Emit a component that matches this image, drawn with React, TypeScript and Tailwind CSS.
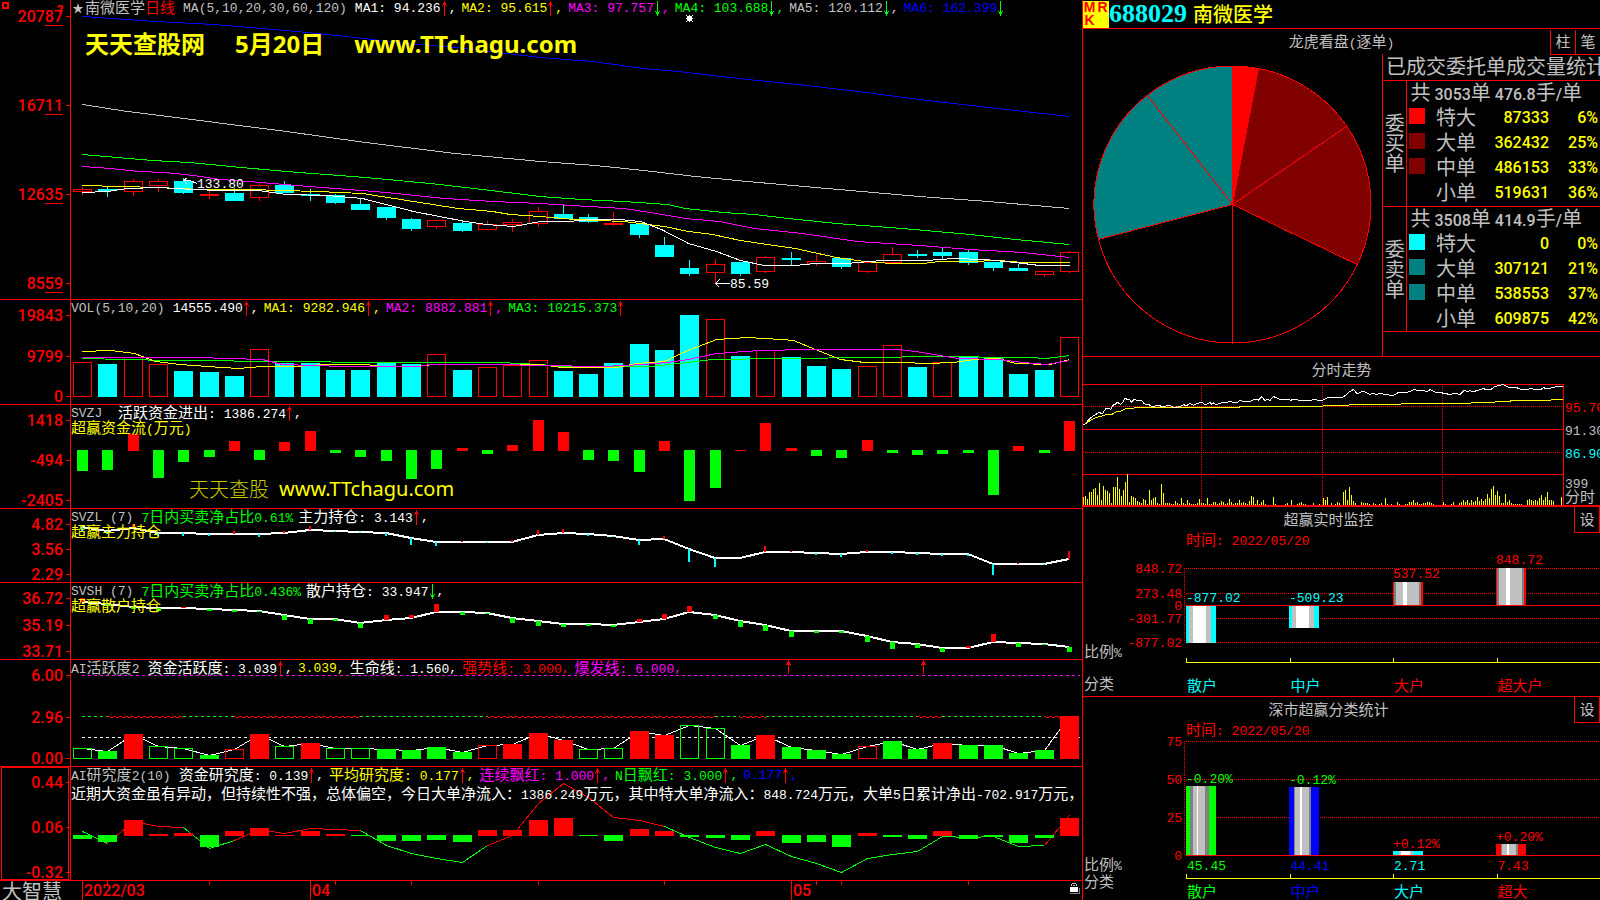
import React from 'react';
import { clsx } from 'clsx';

const RED = '#ff0000';
const GREEN = '#00ff00';
const CYAN = '#00ffff';
const YELLOW = '#ffff00';
const MAGENTA = '#ff00ff';
const SILVER = '#c0c0c0';
const BLUE = '#0000ff';
const TEAL = '#008080';
const MAROON = '#800000';

const DIGITS = "font-['Roboto','Noto_Sans_CJK_SC',sans-serif]";
const CJK = "font-['Noto_Sans_CJK_SC',sans-serif]";
const MONO = "font-['Liberation_Mono','Noto_Sans_CJK_SC',monospace]";

// one slot per trading day
const DAYS = 40;
const dayX = (i: number) => Math.round(82 + (987 * i) / (DAYS - 1));

/* ---------- data ---------- */

// [high, top, bottom, low, up?]
const candles: [number, number, number, number, number][] = [
  [187, 189, 192, 195, 1], [187, 189, 191, 197, 0], [179, 181, 192, 196, 1], [179, 181, 186, 192, 1],
  [178, 181, 193, 194, 0], [191, 194, 196, 199, 1], [188, 193, 201, 201, 0], [183, 185, 198, 201, 1],
  [181, 185, 193, 193, 0], [189, 194, 196, 201, 0], [194, 195, 203, 204, 0], [198, 204, 210, 210, 0],
  [207, 207, 218, 220, 0], [218, 219, 229, 231, 0], [220, 220, 227, 229, 1], [220, 223, 231, 232, 0],
  [221, 224, 230, 230, 1], [219, 222, 225, 232, 1], [207, 211, 224, 227, 1], [205, 214, 219, 219, 0],
  [214, 217, 222, 223, 0], [212, 223, 224, 226, 1], [224, 224, 235, 238, 0], [237, 245, 257, 257, 0],
  [260, 268, 274, 276, 0], [259, 264, 273, 283, 1], [262, 262, 274, 276, 0], [256, 257, 272, 273, 1],
  [252, 258, 260, 266, 0], [255, 261, 264, 266, 1], [258, 258, 267, 269, 0], [262, 262, 272, 273, 1],
  [247, 254, 263, 263, 1], [250, 254, 256, 258, 0], [248, 252, 256, 259, 0], [250, 252, 263, 265, 0],
  [262, 262, 268, 271, 0], [264, 268, 271, 271, 0], [270, 271, 275, 277, 1], [251, 252, 272, 273, 1],
];

const priceLines = [
  { color: BLUE, points: '82,16 155,21 214,24 296,31 337,35 406,43 455,47 540,57 592,61 643,68 678,71 747,79 788,83 850,90 919,99 988,107 1069,116' },
  { color: SILVER, points: '82,104 127,111 207,121 286,131 365,142 455,153 540,161 595,165 643,170 695,176 747,181 815,187 850,190 919,196 988,201 1069,208' },
  { color: GREEN, points: '82,154 152,160 189,162 241,167 286,171 365,177 430,183 482,189 540,196 581,199 623,201 667,204 685,208 723,212 754,214 788,218 836,223 902,228 970,234 1015,239 1069,244' },
  { color: MAGENTA, points: '82,166 110,168 138,171 165,172 193,175 220,179 248,181 296,185 348,189 386,192 444,198 492,201 540,203 571,205 623,208 650,212 685,218 719,221 754,228 802,233 857,241 919,245 970,249 1022,252 1069,257' },
  { color: YELLOW, points: '82,185 158,187 200,189 248,189 317,191 362,193 413,201 458,208 492,211 510,214 540,216 574,219 623,221 664,226 688,231 712,234 740,240 767,244 795,248 836,257 864,261 891,263 922,263 939,261 970,261 998,260 1022,262 1069,262' },
  { color: '#ffffff', points: '82,192 107,191 127,188 158,187 193,189 220,190 258,190 286,194 327,195 362,198 413,211 465,221 486,224 513,226 540,221 568,221 592,219 619,219 640,221 661,229 688,243 716,251 740,260 764,265 795,265 815,263 846,263 881,260 926,260 953,258 984,259 1015,262 1039,265 1069,265' },
];

const volumes = [
  362, 364, 357, 364, 371, 372, 376, 349, 363, 363, 370, 370, 363, 364, 354, 370, 367, 365, 360, 371,
  374, 363, 344, 350, 315, 319, 356, 350, 357, 366, 369, 366, 345, 367, 362, 356, 357, 374, 370, 337,
];
const volumeUp = '1011000100000010111000000101000110100001';

const volumeLines = [
  { color: GREEN, points: '82,358 169,360 296,361 365,362 499,362 540,364 561,366 650,366 678,363 712,359 781,358 877,357 926,356 1029,357 1046,358 1069,355' },
  { color: YELLOW, points: '82,351 110,350 134,353 155,361 179,364 207,366 238,368 262,366 296,366 324,364 365,364 382,366 413,366 434,364 540,364 561,367 616,367 636,363 664,361 685,351 716,339 747,337 781,339 793,340 815,349 840,359 864,362 902,362 926,363 953,362 974,359 998,358 1015,363 1050,364 1069,359' },
  { color: MAGENTA, points: '82,357 196,357 262,359 282,364 344,366 417,366 430,364 499,364 540,365 602,366 643,364 667,362 688,359 716,353 760,350 809,349 898,349 922,352 957,358 998,359 1022,362 1046,364 1069,360' },
];

// far end of every bar, the near end is the zero line
const moneyFlow = [
  471, 470, 434, 478, 462, 457, 441, 460, 442, 431, 453, 457, 461, 479, 469, 448, 454, 445, 420, 432,
  460, 461, 472, 441, 501, 488, 450, 423, 448, 456, 458, 440, 453, 455, 454, 453, 495, 446, 453, 421,
];

const mainHold = [
  527, 531, 528, 533, 533, 534, 534, 534, 533, 530, 531, 532, 533, 538, 542, 542, 542, 542, 535, 533,
  534, 536, 540, 539, 549, 558, 558, 552, 552, 553, 554, 552, 552, 553, 554, 554, 564, 564, 564, 559,
];
const mainHoldEnd = [
  531, 534, 524, 536, 536, 536, 531, 537, 531, 526, 532, 533, 536, 545, 546, 541, 543, 540, 530, 529,
  536, 537, 545, 536, 562, 567, 558, 546, 551, 555, 557, 550, 554, 555, 556, 556, 575, 563, 565, 551,
];

const retailHold = [
  602, 604, 607, 608, 608, 609, 610, 611, 615, 619, 619, 623, 620, 618, 612, 612, 613, 618, 621, 624,
  624, 625, 622, 619, 612, 615, 621, 625, 631, 631, 631, 636, 642, 644, 648, 648, 642, 643, 644, 647,
];
const retailHoldEnd = [
  598, 606, 609, 611, 607, 611, 612, 612, 620, 624, 621, 628, 615, 615, 604, 615, 614, 623, 626, 627,
  626, 627, 619, 614, 606, 619, 627, 631, 637, 633, 633, 642, 649, 648, 652, 646, 634, 647, 645, 652,
];

// R / G filled, r / g outlined
const activity = [
  748, 751, 734, 746, 748, 755, 749, 734, 746, 743, 748, 748, 749, 750, 747, 752, 745, 744, 733, 740,
  749, 748, 731, 735, 725, 728, 745, 735, 747, 750, 754, 746, 741, 749, 743, 745, 745, 753, 750, 716,
];
const activityKind = 'gGRggGrRgRggGGGGrRRRggRRggGRGGGrGGRGGGGR';

const research = [
  839, 842, 820, 834, 833, 847, 831, 828, 835, 831, 834, 836, 841, 841, 840, 842, 830, 830, 820, 818,
  836, 841, 829, 831, 837, 838, 840, 831, 843, 842, 847, 833, 837, 839, 831, 839, 837, 843, 838, 818,
];
const researchLine = [
  831, 843, 821, 826, 827, 848, 840, 829, 833, 828, 829, 830, 845, 853, 858, 862, 845, 835, 803, 783,
  797, 817, 820, 826, 837, 847, 853, 844, 856, 863, 872, 858, 854, 851, 836, 837, 836, 846, 845, 815,
];
const researchRuns = [
  { from: 0, to: 1, color: GREEN }, { from: 1, to: 4, color: RED }, { from: 4, to: 6, color: GREEN },
  { from: 6, to: 11, color: RED }, { from: 11, to: 16, color: GREEN }, { from: 16, to: 23, color: RED },
  { from: 23, to: 38, color: GREEN }, { from: 38, to: 39, color: RED },
];

const intradayPrice =
  '10,210 18,205 24,196 30,190 38,184 45,180 55,173 68,175 78,160 85,160 92,163 100,150 106,148 112,142 122,148 128,142 135,130 142,133 150,135 155,142 162,133 172,136 185,136 192,146 200,150 206,148 215,155 225,153 235,151 245,154 255,154 265,151 275,154 288,159 300,154 310,149 320,152 330,145 340,151 350,146 365,141 372,147 380,147 390,143 395,148 400,144 408,150 420,145 430,141 440,142 450,139 460,142 470,144 480,136 490,139 500,140 512,138 525,133 535,135 545,125 555,137 562,133 570,136 580,125 590,128 600,133 612,135 625,133 632,136 640,133 655,135 670,138 680,135 690,137 700,133 715,136 730,135 740,129 750,127 775,129 790,126 795,122 808,110 814,108 820,103 824,107 832,117 840,112 848,108 860,114 870,118 882,115 890,119 900,115 910,117 920,117 930,121 940,122 950,115 960,111 975,113 990,110 1002,103 1015,108 1030,106 1042,110 1050,104 1065,111 1080,113 1095,115 1110,119 1120,115 1140,118 1146,113 1153,105 1160,110 1170,107 1180,110 1190,107 1200,104 1210,101 1220,104 1235,102 1243,96 1250,93 1260,92 1268,88 1276,92 1285,97 1300,97 1310,98 1320,102 1340,103 1355,101 1365,104 1385,102 1390,98 1400,101 1410,100 1420,97 1430,95 1449,94';
const intradayAverage =
  '10,210 20,205 28,198 38,193 46,188 62,184 74,180 96,178 104,172 124,168 138,160 185,158 290,156 300,157 478,157 480,154 728,154 730,151 806,151 808,148 962,148 964,145 1172,145 1175,142 1244,142 1246,139 1290,139 1294,136 1412,136 1414,133 1449,133';
const intradayVolume = [
  8, 9, 6, 13, 13, 16, 17, 10, 22, 5, 19, 15, 14, 12, 2, 18, 18, 28, 16, 9, 15, 23, 31, 3, 9, 8, 7, 4, 3, 2,
  6, 5, 1, 15, 5, 7, 8, 2, 1, 21, 12, 2, 2, 2, 1, 1, 4, 2, 1, 7, 2, 1, 5, 2, 1, 1, 1, 2, 6, 2,
  2, 1, 7, 1, 1, 3, 3, 1, 2, 4, 3, 1, 2, 6, 3, 1, 2, 2, 5, 2, 3, 2, 1, 4, 9, 8, 1, 5, 1, 3,
  5, 1, 0, 0, 0, 8, 1, 0, 0, 0, 0, 1, 2, 0, 5, 0, 0, 1, 2, 3, 1, 1, 0, 0, 0, 2, 0, 0, 1, 0,
  7, 5, 8, 0, 2, 0, 1, 3, 2, 0, 13, 15, 5, 18, 10, 4, 2, 0, 0, 3, 2, 2, 2, 1, 0, 2, 1, 0, 1, 2,
  0, 7, 1, 0, 1, 0, 0, 3, 1, 0, 0, 1, 1, 3, 3, 5, 2, 3, 1, 1, 2, 2, 3, 3, 2, 1, 0, 0, 0, 0,
  3, 1, 0, 0, 1, 3, 0, 0, 2, 3, 5, 3, 5, 2, 5, 3, 4, 8, 4, 6, 4, 6, 11, 7, 16, 19, 10, 14, 9, 2,
  2, 11, 3, 5, 2, 1, 1, 1, 1, 1, 0, 0, 5, 6, 5, 4, 5, 4, 7, 10, 5, 8, 13, 5, 5, 4, 0, 0, 0, 8,
];

/* ---------- text helpers ---------- */

const splitRuns = (text: string) => text.split(/([\u3000-\u9fff\uff00-\uffef]+)/).filter(Boolean);
const isWide = (part: string) => /[\u3000-\uffef]/.test(part);

// Chinese runs are set larger than the half-width runs next to them
const Txt = ({ children, className }: { children: string; className?: string }) => (
  <span className={clsx('whitespace-pre', MONO, className)}>
    {splitRuns(children).map((part, i) => (
      <span key={i} className={isWide(part) ? `text-[15px] ${CJK}` : 'text-[13px]'}>{part}</span>
    ))}
  </span>
);

const BigTxt = ({ children }: { children: string }) => (
  <span className="whitespace-pre">
    {splitRuns(children).map((part, i) => (
      <span key={i} className={isWide(part) ? `text-xl leading-[22px] ${CJK}` : `text-base leading-[22px] font-medium ${DIGITS}`}>{part}</span>
    ))}
  </span>
);

const Arrow = ({ down = false }) => (
  <svg width="8" height="15" viewBox="0 0 8 15" shapeRendering="crispEdges" className="shrink-0">
    {down
      ? <path d="M3 0h1v15h-1zM2 11h3v2h-3zM1 10h1v1h-1zM5 10h1v1h-1z" fill={GREEN} />
      : <path d="M3 0h1v15h-1zM2 2h3v2h-3zM1 4h1v1h-1zM5 4h1v1h-1z" fill={RED} />}
  </svg>
);

type Item = { text: string; color: string; dir?: 'up' | 'down'; end?: boolean };

const Header = ({ name, items, lead }: { name: string; items: Item[]; lead?: React.ReactNode }) => (
  <div className="absolute inset-x-0 top-0 flex h-4 items-center leading-4">
    {lead}
    <Txt className="mr-2 text-[#c0c0c0]">{name}</Txt>
    <div className="flex items-center gap-[5px]">
      {items.map((it, i) => (
        <span key={i} className={clsx('flex items-center', it.color)}>
          <Txt>{it.text}</Txt>
          {it.dir && <Arrow down={it.dir === 'down'} />}
          {!it.end && <Txt>,</Txt>}
        </span>
      ))}
    </div>
  </div>
);

const SubTitle = ({ children }: { children: string }) => (
  <div className="absolute left-0 top-3.5 leading-4 text-[#ff0]"><Txt>{children}</Txt></div>
);

/* ---------- left column ---------- */

type PanelProps = {
  top: number;
  height: number;
  ticks: [string, number][];
  underline?: boolean;
  selected?: boolean;
  axisExtra?: React.ReactNode;
  overlay: React.ReactNode;
  children: React.ReactNode;
};

const Panel = ({ top, height, ticks, underline, selected, axisExtra, overlay, children }: PanelProps) => (
  <section className="flex border-b border-[#f00]">
    <svg width="70" height={height} viewBox={`0 ${top} 70 ${height}`} className={clsx('shrink-0 overflow-visible text-base font-medium', DIGITS)} fill={RED} shapeRendering="crispEdges">
      {selected && <rect x="1.5" y={top + 0.5} width="67" height={height - 1} fill="none" stroke={RED} />}
      {ticks.map(([label, y]) => (
        <g key={label}>
          <text x="63" y={y + 6} textAnchor="end">{label}</text>
          <rect x="66" y={y} width="4" height="1" />
          {underline && <rect x="45" y={y + 9} width="18" height="1" />}
        </g>
      ))}
      {axisExtra}
    </svg>
    <div className="relative min-w-0 flex-1 overflow-hidden border-l border-[#f00]">
      <svg height={height} viewBox={`71 ${top} 1011 ${height}`} preserveAspectRatio="none" className="block w-full" shapeRendering="crispEdges" fill="none">
        {children}
      </svg>
      {overlay}
    </div>
  </section>
);

const Lines = ({ data }: { data: { color: string; points: string }[] }) => (
  <>
    {data.map((l) => <polyline key={l.color} points={l.points} stroke={l.color} transform="translate(.5 .5)" />)}
  </>
);

const seriesPoints = (ys: number[], from = 0, to = ys.length - 1) =>
  ys.slice(from, to + 1).map((y, i) => `${dayX(from + i)},${y}`).join(' ');

const Box = ({ x, top, bottom, color }: { x: number; top: number; bottom: number; color: string }) => (
  <rect x={x - 8.5} y={top + 0.5} width="18" height={Math.max(bottom - top - 1, 1)} stroke={color} />
);

const PricePanel = () => (
  <Panel
    top={0}
    height={299}
    underline
    ticks={[['20787', 16], ['16711', 105], ['12635', 194], ['8559', 283]]}
    axisExtra={
      <>
        <path d="M3 3h5v5h-5z" fill="none" stroke={RED} strokeWidth="2" />
        <text x="57" y="14" className="text-[13px] font-bold">?</text>
      </>
    }
    overlay={
      <>
        <Header
          lead={
            <>
              <svg width="14" height="14" viewBox="0 0 14 14" fill={SILVER}><path d="M7 2l1.3 4h4l-3.2 2.400 1.200 4.100L7 10l-3.300 2.500 1.200-4.100L1.700 6h4z" /></svg>
              <Txt className="text-[#c0c0c0]">南微医学</Txt>
              <Txt className="mr-2 text-[#f00]">日线</Txt>
            </>
          }
          name="MA(5,10,20,30,60,120)"
          items={[
            { text: 'MA1: 94.236', color: 'text-white', dir: 'up' },
            { text: 'MA2: 95.615', color: 'text-[#ff0]', dir: 'up' },
            { text: 'MA3: 97.757', color: 'text-[#f0f]', dir: 'down' },
            { text: 'MA4: 103.688', color: 'text-[#0f0]', dir: 'down' },
            { text: 'MA5: 120.112', color: 'text-[#c0c0c0]', dir: 'down' },
            { text: 'MA6: 162.399', color: 'text-[#00f]', dir: 'down', end: true },
          ]}
        />
        <p className={clsx('absolute left-3.5 top-7 flex items-baseline gap-[30px] whitespace-nowrap text-2xl leading-8 font-bold text-[#ff0]', "font-['Noto_Sans','Noto_Sans_CJK_SC',sans-serif]")}>
          <span>天天查股网</span>
          <span>5月20日</span>
          <span>www.TTchagu.com</span>
        </p>
        <span className={clsx('absolute left-[126px] top-[177px] text-[13px] leading-4 text-white', MONO)}>133.80</span>
        <span className={clsx('absolute left-[659px] top-[277px] text-[13px] leading-4 text-white', MONO)}>85.59</span>
      </>
    }
  >
    {candles.map(([high, top, bottom, low, up], i) => {
      const x = dayX(i);
      return up ? (
        <g key={i}>
          <path d={`M${x + 0.5} ${high}V${top}M${x + 0.5} ${bottom}V${low}`} stroke={RED} />
          <Box x={x} top={top} bottom={bottom} color={RED} />
        </g>
      ) : (
        <g key={i} fill={CYAN}>
          <rect x={x} y={high} width="1" height={low - high} />
          <rect x={x - 9} y={top} width="19" height={bottom - top} />
        </g>
      );
    })}
    <Lines data={priceLines} />
    <path d="M197 183l-8 -3h-6M187 177l-4 3 4 4M729 283h-14M719 279l-4 4 4 4" stroke="#fff" transform="translate(.5 .5)" />
    <path d="M687 16h5v5h-5zM689 15h1v7h-1zM686 18h7v1h-7zM686 15h1v1h-1zM692 15h1v1h-1zM686 21h1v1h-1zM692 21h1v1h-1z" fill="#fff" />
  </Panel>
);

const VolumePanel = () => (
  <Panel
    top={300}
    height={104}
    ticks={[['19843', 315], ['9799', 356], ['0', 396]]}
    overlay={
      <Header
        name="VOL(5,10,20)"
        items={[
          { text: '14555.490', color: 'text-white', dir: 'up' },
          { text: 'MA1: 9282.946', color: 'text-[#ff0]', dir: 'up' },
          { text: 'MA2: 8882.881', color: 'text-[#f0f]', dir: 'up' },
          { text: 'MA3: 10215.373', color: 'text-[#0f0]', dir: 'up', end: true },
        ]}
      />
    }
  >
    {volumes.map((top, i) =>
      volumeUp[i] === '1'
        ? <Box key={i} x={dayX(i)} top={top} bottom={397} color={RED} />
        : <rect key={i} x={dayX(i) - 9} y={top} width="19" height={397 - top} fill={CYAN} />
    )}
    <Lines data={volumeLines} />
  </Panel>
);

const MoneyFlowPanel = () => (
  <Panel
    top={405}
    height={103}
    ticks={[['1418', 420], ['-494', 460], ['-2405', 500]]}
    overlay={
      <>
        <Header name="SVZJ " items={[{ text: '活跃资金进出: 1386.274', color: 'text-white', dir: 'up' }]} />
        <SubTitle>超赢资金流(万元)</SubTitle>
        <p className="absolute left-[118px] top-[70px] flex gap-2.5 whitespace-nowrap text-xl text-[#ff0]">
          <span className={clsx('font-light text-[#cc0]', CJK)}>天天查股</span>
          <span className="font-['Noto_Sans',sans-serif]">www.TTchagu.com</span>
        </p>
      </>
    }
  >
    {moneyFlow.map((end, i) =>
      end < 451
        ? <rect key={i} x={dayX(i) - 5} y={end} width="11" height={451 - end} fill={RED} />
        : <rect key={i} x={dayX(i) - 5} y="450" width="11" height={end - 450} fill={GREEN} />
    )}
  </Panel>
);

const MainHoldPanel = () => (
  <Panel
    top={509}
    height={73}
    ticks={[['4.82', 524], ['3.56', 549], ['2.29', 574]]}
    overlay={
      <>
        <Header
          name="SVZL (7)"
          items={[
            { text: '7日内买卖净占比0.61%', color: 'text-[#0f0]', end: true },
            { text: '主力持仓: 3.143', color: 'text-white', dir: 'up' },
          ]}
        />
        <SubTitle>超赢主力持仓</SubTitle>
      </>
    }
  >
    <polyline points={seriesPoints(mainHold)} stroke="#fff" strokeWidth="2" />
    {mainHold.map((y, i) => {
      const end = mainHoldEnd[i];
      return <rect key={i} x={dayX(i) - 1} y={Math.min(y, end)} width="2" height={Math.abs(end - y)} fill={end < y ? RED : CYAN} />;
    })}
  </Panel>
);

const RetailHoldPanel = () => (
  <Panel
    top={583}
    height={76}
    ticks={[['36.72', 598], ['35.19', 625], ['33.71', 651]]}
    overlay={
      <>
        <Header
          name="SVSH (7)"
          items={[
            { text: '7日内买卖净占比0.436%', color: 'text-[#0f0]', end: true },
            { text: '散户持仓: 33.947', color: 'text-white', dir: 'down' },
          ]}
        />
        <SubTitle>超赢散户持仓</SubTitle>
      </>
    }
  >
    <polyline points={seriesPoints(retailHold)} stroke="#fff" strokeWidth="2" />
    {retailHold.map((y, i) => {
      const end = retailHoldEnd[i];
      return <rect key={i} x={dayX(i) - 2} y={Math.min(y, end)} width="5" height={Math.abs(end - y)} fill={end < y ? RED : GREEN} />;
    })}
  </Panel>
);

const ActivityPanel = () => (
  <Panel
    top={660}
    height={106}
    ticks={[['6.00', 675], ['2.96', 717], ['0.00', 758]]}
    overlay={
      <Header
        name="AI活跃度2"
        items={[
          { text: '资金活跃度: 3.039', color: 'text-white', dir: 'up' },
          { text: '3.039', color: 'text-[#ff0]' },
          { text: '生命线: 1.560', color: 'text-white' },
          { text: '强势线: 3.000', color: 'text-[#f00]' },
          { text: '爆发线: 6.000', color: 'text-[#f0f]' },
        ]}
      />
    }
  >
    <path d="M82 675.500H1080" stroke={MAGENTA} strokeDasharray="3 3" />
    <path d="M82 737.500H1080" stroke="#fff" strokeDasharray="3 3" />
    <path d="M107 716.500H1069" stroke={RED} strokeDasharray="3 3" />
    <path d="M107 717.500H1069" stroke={RED} strokeDasharray="3 3" strokeDashoffset="3" />
    <path d="M82 716.500H107M183 716.500H234M360 716.500H487M715 716.500H740M766 716.500H917M942 716.500H1044" stroke="#000" strokeWidth="3" />
    <path d="M82 716.500H107M183 716.500H234M360 716.500H487M715 716.500H740M766 716.500H917M942 716.500H1044" stroke={GREEN} strokeDasharray="3 3" />
    <polyline points={seriesPoints(activity)} stroke="#fff" transform="translate(.5 .5)" />
    {activity.map((top, i) => {
      const kind = activityKind[i];
      const color = kind.toLowerCase() === 'r' ? RED : GREEN;
      return kind === kind.toLowerCase()
        ? <Box key={i} x={dayX(i)} top={top} bottom={759} color={color} />
        : <rect key={i} x={dayX(i) - 9} y={top} width="19" height={759 - top} fill={color} />;
    })}
    <path d="M788 660h1v14h-1zM787 662h3v2h-3zM786 664h5v1h-5zM923 660h1v14h-1zM922 662h3v2h-3zM921 664h5v1h-5z" fill={RED} />
  </Panel>
);

const ResearchPanel = () => (
  <Panel
    top={767}
    height={113}
    selected
    ticks={[['0.44', 782], ['0.06', 827], ['-0.32', 872]]}
    overlay={
      <>
        <Header
          name="AI研究度2(10)"
          items={[
            { text: '资金研究度: 0.139', color: 'text-white', dir: 'up' },
            { text: '平均研究度: 0.177', color: 'text-[#ff0]', dir: 'up' },
            { text: '连续飘红: 1.000', color: 'text-[#f0f]', dir: 'up' },
            { text: 'N日飘红: 3.000', color: 'text-[#0f0]', dir: 'up' },
            { text: '0.177', color: 'text-[#00f]', dir: 'up' },
          ]}
        />
        <p className="absolute left-0 top-[18px] leading-4 text-white">
          <Txt>近期大资金虽有异动，但持续性不强，总体偏空，今日大单净流入：1386.249万元，其中特大单净流入：848.724万元，大单5日累计净出-702.917万元，</Txt>
        </p>
      </>
    }
  >
    {researchRuns.map((r) => (
      <polyline key={r.from} points={seriesPoints(researchLine, r.from, r.to)} stroke={r.color} transform="translate(.5 .5)" />
    ))}
    {research.map((end, i) =>
      end < 836
        ? <rect key={i} x={dayX(i) - 9} y={end} width="19" height={836 - end} fill={RED} />
        : <rect key={i} x={dayX(i) - 9} y="835" width="19" height={end - 835} fill={GREEN} />
    )}
  </Panel>
);

const TimeAxis = () => (
  <footer className="flex h-[19px]">
    <div className={clsx('w-[70px] shrink-0 pl-0.5 text-xl leading-[19px] text-[#c0c0c0]', CJK)}>大智慧</div>
    <div className="relative flex-1">
      <svg height="19" viewBox="70 881 1012 19" preserveAspectRatio="none" className="block w-full" shapeRendering="crispEdges" stroke={RED}>
        <path d="M82.500 881v19M310.500 881v19M791.500 881v19M107.500 881v4M209.500 881v4M335.500 881v4M411.500 881v4M538.500 881v4M664.500 881v4M816.500 881v4M841.500 881v4M968.500 881v4" />
      </svg>
      <div className={clsx('absolute inset-0 text-base leading-[19px] font-medium text-[#f00]', DIGITS)}>
        <span className="absolute left-3.5">2022/03</span>
        <span className="absolute left-[242px]">04</span>
        <span className="absolute left-[723px]">05</span>
      </div>
      <svg width="10" height="12" viewBox="0 0 10 12" shapeRendering="crispEdges" className="absolute right-0.5 top-0.5">
        <path d="M2 0h4v1h-4zM1 1h1v2h-1zM6 1h1v2h-1zM3 2h2v1h-2z" fill={SILVER} />
        <path d="M0 4h8v5h-8z" fill="#fff" />
        <path d="M9 5h1v6h-10v-1h9z" fill="#808080" />
      </svg>
    </div>
  </footer>
);

/* ---------- right column ---------- */

const buyOrders = [
  { name: '特大', count: 87333, pct: '6%', fill: RED, swatch: 'bg-[#f00]' },
  { name: '大单', count: 362432, pct: '25%', fill: MAROON, swatch: 'bg-[#800000]' },
  { name: '中单', count: 486153, pct: '33%', fill: MAROON, swatch: 'bg-[#800000]' },
  { name: '小单', count: 519631, pct: '36%', fill: 'none', swatch: '' },
];
const sellOrders = [
  { name: '特大', count: 0, pct: '0%', fill: CYAN, swatch: 'bg-[#0ff]' },
  { name: '大单', count: 307121, pct: '21%', fill: TEAL, swatch: 'bg-[#008080]' },
  { name: '中单', count: 538553, pct: '37%', fill: TEAL, swatch: 'bg-[#008080]' },
  { name: '小单', count: 609875, pct: '42%', fill: 'none', swatch: '' },
];

type Order = (typeof buyOrders)[number];

// buys fill the right half clockwise, sells the left half counter-clockwise
const wedges = (orders: Order[], dir: 1 | -1) => {
  const total = orders.reduce((s, o) => s + o.count, 0);
  let angle = 0;
  return orders.filter((o) => o.count > 0).map((o) => {
    const a0 = angle;
    angle += (o.count / total) * Math.PI;
    const p = (a: number) => `${149.5 + dir * 138.5 * Math.sin(a)} ${150.5 - 138.5 * Math.cos(a)}`;
    return <path key={o.name} d={`M149.500 150.500L${p(a0)}A138.500 138.500 0 0 ${dir === 1 ? 1 : 0} ${p(angle)}Z`} fill={o.fill} stroke={RED} />;
  });
};

const OrderGroup = ({ side, total, average, orders }: { side: string; total: string; average: string; orders: Order[] }) => (
  <tbody className="border-y border-[#f00]">
    <tr className="h-[25px]">
      <th rowSpan={5} scope="rowgroup" className="border-r border-[#f00] font-normal">
        <span className={clsx('mx-auto block w-5 break-all text-xl leading-5 text-[#c0c0c0]', CJK)}>{side}</span>
      </th>
      <td colSpan={4} className="pl-1 align-top leading-[22px] text-[#c0c0c0]">
        <BigTxt>{`共 ${total}单 ${average}手/单`}</BigTxt>
      </td>
    </tr>
    {orders.map((o) => (
      <tr key={o.name} className="h-[25px] align-top leading-[22px] text-[#ff0]">
        <td className="pt-0.5 pl-0.5"><span className={clsx('block size-4', o.swatch)} /></td>
        <td className="pl-1.5 text-[#c0c0c0]"><BigTxt>{o.name}</BigTxt></td>
        <td className="text-right"><BigTxt>{String(o.count)}</BigTxt></td>
        <td className="pr-0.5 text-right"><BigTxt>{o.pct}</BigTxt></td>
      </tr>
    ))}
  </tbody>
);

const StockHeader = () => (
  <header className="flex h-[29px] items-center border-b border-[#f00]">
    <div className="grid h-[27px] w-[26px] grid-cols-2 bg-[#ff0] text-center font-['Liberation_Sans',sans-serif] text-sm leading-3 font-bold text-[#f00]">
      <span>M</span><span>R</span><span>K</span>
    </div>
    <h1 className="flex items-center gap-1.5">
      <span className="font-['Liberation_Serif',serif] text-[26px] leading-7 font-bold text-[#0ff]">688029</span>
      <span className={clsx('text-xl leading-7 font-medium text-[#ff0]', CJK)}>南微医学</span>
    </h1>
  </header>
);

const OrderBook = () => (
  <section className="border-b border-[#f00]">
    <div className="grid h-[25px] grid-cols-[1fr_auto_1fr] items-center text-[#c0c0c0]">
      <h2 className="col-start-2"><Txt>龙虎看盘(逐单)</Txt></h2>
      <div className={clsx('flex h-[25px] justify-self-end text-[15px]', CJK)}>
        <button type="button" className="w-[25px] border-b border-l border-[#f00]">柱</button>
        <button type="button" className="w-[25px] border-b border-l border-[#f00]">笔</button>
      </div>
    </div>
    <div className="flex">
      <svg height="302" viewBox="0 0 299 302" className="min-w-0 flex-1" shapeRendering="crispEdges">
        {wedges(buyOrders, 1)}
        {wedges(sellOrders, -1)}
      </svg>
      <div className="w-[218px] shrink-0 overflow-hidden border-l border-[#f00] pl-px">
        <h3 id="orders-title" className={clsx('h-[26px] whitespace-nowrap pl-0.5 text-xl leading-6 text-[#c0c0c0]', CJK)}>已成交委托单成交量统计</h3>
        <table aria-labelledby="orders-title" className="w-[216px] table-fixed border-collapse">
          <colgroup><col className="w-[22px]" /><col className="w-6" /><col /><col className="w-[70px]" /><col className="w-[51px]" /></colgroup>
          <OrderGroup side="委买单" total="3053" average="476.8" orders={buyOrders} />
          <OrderGroup side="委卖单" total="3508" average="414.9" orders={sellOrders} />
        </table>
      </div>
    </div>
  </section>
);

const Intraday = () => (
  <section className="border-b-2 border-[#f00]">
    <h2 className="h-[27px] text-center leading-6 text-[#c0c0c0]"><Txt>分时走势</Txt></h2>
    <div className="flex">
      <svg height="121" viewBox="9 87 1443 363" preserveAspectRatio="none" className="block min-w-0 flex-1" shapeRendering="crispEdges" fill="none" strokeWidth="3">
        <g stroke={RED}>
          <path d="M9 88.500H1450.500V450M9 223.500H1450M9 358.500H1450" />
          <path d="M9 154.500H1450M9 292.500H1450M364.500 88V450M727.500 88V450M1087.500 88V450" strokeDasharray="3 3" />
        </g>
        <g fill={YELLOW}>
          {intradayVolume.map((v, i) => <rect key={i} x={9 + i * 6} y={450 - v * 3} width="3" height={v * 3} />)}
        </g>
        <polyline points={intradayAverage} stroke={YELLOW} />
        <polyline points={intradayPrice} stroke="#fff" />
      </svg>
      <div className="h-[121px] w-9 shrink-0 overflow-hidden pl-px pt-[11px] text-[#c0c0c0]">
        <div className="h-[23px] leading-[23px] text-[#f00]"><Txt>95.70</Txt></div>
        <div className="h-[23px] leading-[23px]"><Txt>91.30</Txt></div>
        <div className="h-[23px] leading-[23px] text-[#0ff]"><Txt>86.90</Txt></div>
        <div className="mt-3 h-[13px] leading-[13px]"><Txt>399</Txt></div>
        <div className="h-[13px] leading-[13px]"><Txt>分时</Txt></div>
      </div>
    </div>
  </section>
);

type Bar = {
  name: string;
  color: string;
  text: string;
  label: string;
  labelColor: string;
  labelY: number;
  y: number;
  h: number;
  value?: string;
  stripes: [number, number, string][];
};

const DARK = '#808080';
const WIDE: Bar['stripes'] = [[3, 4, SILVER], [7, 13, '#fff'], [20, 5, SILVER]];
const FULL: Bar['stripes'] = [[1, 2, DARK], [3, 7, SILVER], [10, 4, '#fff'], [14, 12, SILVER], [26, 2, DARK]];
const SLIM: Bar['stripes'] = [[5, 1, DARK], [6, 5, SILVER], [11, 2, '#fff'], [13, 7, SILVER], [20, 2, DARK]];

const monitorBars: Bar[] = [
  { name: '散户', color: CYAN, text: 'text-[#0ff]', label: '-877.02', labelColor: CYAN, labelY: 54, y: 58, h: 37, stripes: WIDE },
  { name: '中户', color: CYAN, text: 'text-[#0ff]', label: '-509.23', labelColor: CYAN, labelY: 54, y: 58, h: 22, stripes: WIDE },
  { name: '大户', color: RED, text: 'text-[#f00]', label: '537.52', labelColor: RED, labelY: 30, y: 34, h: 23, stripes: FULL },
  { name: '超大户', color: RED, text: 'text-[#f00]', label: '848.72', labelColor: RED, labelY: 16, y: 20, h: 37, stripes: FULL },
];

const categoryBars: Bar[] = [
  { name: '散户', color: GREEN, text: 'text-[#0f0]', label: '-0.20%', labelColor: GREEN, labelY: 45, y: 48, h: 69, value: '45.45', stripes: [[4, 3, DARK], [7, 4, SILVER], [11, 1, '#fff'], [12, 7, SILVER], [19, 4, DARK]] },
  { name: '中户', color: BLUE, text: 'text-[#00f]', label: '-0.12%', labelColor: GREEN, labelY: 46, y: 49, h: 68, value: '44.41', stripes: SLIM },
  { name: '大户', color: CYAN, text: 'text-[#0ff]', label: '+0.12%', labelColor: RED, labelY: 110, y: 113, h: 4, value: '2.71', stripes: [[6, 2, SILVER], [8, 9, '#fff'], [17, 3, SILVER]] },
  { name: '超大', color: RED, text: 'text-[#f00]', label: '+0.20%', labelColor: RED, labelY: 103, y: 106, h: 11, value: '7.43', stripes: SLIM },
];

type BarChartProps = { height: number; ticks: [string, number][]; zero: number; bars: Bar[] };

const BarChart = ({ height, ticks, zero, bars }: BarChartProps) => (
  <svg width="517" height={height} viewBox={`0 0 517 ${height}`} className={clsx('block overflow-visible text-[13px]', MONO)} shapeRendering="crispEdges">
    {ticks.map(([label, y]) => (
      <g key={label}>
        <text x="99" y={y + 5} textAnchor="end" fill={RED}>{label}</text>
        <path d={`M103 ${y + 0.5}H517`} stroke={RED} strokeDasharray={y === zero ? undefined : '1 1'} />
      </g>
    ))}
    <path d={`M101.500 ${ticks[0][1]}V${ticks[ticks.length - 1][1]}`} stroke={RED} strokeDasharray="1 1" />
    {bars.map((b, i) => (
      <g key={b.name} transform={`translate(${103 + Math.round(i * 103.4)} 0)`}>
        <rect y={b.y} width="30" height={b.h} fill={b.color} />
        {b.stripes.map(([x, w, fill]) => <rect key={x} x={x} y={b.y} width={w} height={b.h} fill={fill} />)}
        <text x="0" y={b.labelY} fill={b.labelColor}>{b.label}</text>
      </g>
    ))}
  </svg>
);

const Bracket = () => (
  <div className="ml-[103px] grid h-[5px] grid-cols-4">
    {[0, 1, 2, 3].map((i) => <span key={i} className="border-b border-l border-[#ff0]" />)}
  </div>
);

const CategoryNames = ({ bars }: { bars: Bar[] }) => (
  <>
    {bars.map((b) => <span key={b.name} className={clsx('pl-px', b.text)}><Txt>{b.name}</Txt></span>)}
  </>
);

const SectionTitle = ({ children }: { children: string }) => (
  <div className="flex h-[26px]">
    <h2 className="flex-1 text-center leading-6 text-[#c0c0c0]"><Txt>{children}</Txt></h2>
    <button type="button" className={clsx('w-[26px] border-b border-x border-[#f00] text-[15px] text-[#c0c0c0]', CJK)}>设</button>
  </div>
);

const Monitor = () => (
  <section className="border-b border-[#f00]">
    <SectionTitle>超赢实时监控</SectionTitle>
    <p className="-mt-px h-4 pl-[103px] leading-[14px] text-[#f00]"><Txt>时间: 2022/05/20</Txt></p>
    <BarChart height={96} zero={57} bars={monitorBars} ticks={[['848.72', 20], ['273.48', 45], ['0', 57], ['-301.77', 70], ['-877.02', 94]]} />
    <p className="h-3.5 pl-px leading-3.5 text-[#c0c0c0]"><Txt>比例%</Txt></p>
    <Bracket />
    <div className="mt-3.5 mb-[3px] grid h-4 grid-cols-[103px_repeat(4,1fr)] leading-4 text-[#c0c0c0]">
      <span className="-mt-0.5 pl-px"><Txt>分类</Txt></span>
      <CategoryNames bars={monitorBars} />
    </div>
  </section>
);

const CategoryStats = () => (
  <section>
    <SectionTitle>深市超赢分类统计</SectionTitle>
    <p className="-mt-px h-4 pl-[103px] leading-[14px] text-[#f00]"><Txt>时间: 2022/05/20</Txt></p>
    <BarChart height={119} zero={117} bars={categoryBars} ticks={[['75', 3], ['50', 41], ['25', 79], ['0', 117]]} />
    <div className="grid h-[17px] grid-cols-[103px_repeat(4,1fr)] leading-[14px] text-[#c0c0c0]">
      <span className="pl-px"><Txt>比例%</Txt></span>
      {categoryBars.map((b) => <span key={b.name} className={clsx('pl-px', b.text)}><Txt>{b.value ?? ''}</Txt></span>)}
    </div>
    <Bracket />
    <div className="mt-1 grid h-4 grid-cols-[103px_repeat(4,1fr)] leading-4 text-[#c0c0c0]">
      <span className="-mt-2.5 pl-px"><Txt>分类</Txt></span>
      <CategoryNames bars={categoryBars} />
    </div>
  </section>
);

export default function App() {
  return (
    <main className="flex min-h-screen overflow-hidden bg-black">
      <div className="min-w-0 flex-1">
        <PricePanel />
        <VolumePanel />
        <MoneyFlowPanel />
        <MainHoldPanel />
        <RetailHoldPanel />
        <ActivityPanel />
        <ResearchPanel />
        <TimeAxis />
      </div>
      <aside className="w-[518px] shrink-0 border-l border-[#f00]">
        <StockHeader />
        <OrderBook />
        <Intraday />
        <Monitor />
        <CategoryStats />
      </aside>
    </main>
  );
}
